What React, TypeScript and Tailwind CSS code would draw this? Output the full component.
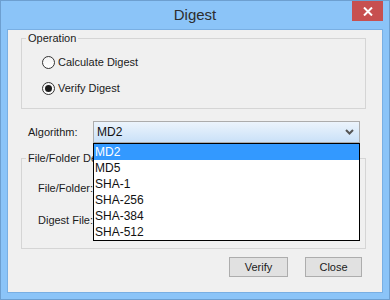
import { useState } from "react";

const algorithms = ["MD2", "MD5", "SHA-1", "SHA-256", "SHA-384", "SHA-512"];

const Radio = ({ checked, label }: { checked: boolean; label: string }) => {
  return (
    <label className="flex h-[26px] items-center">
      <span className="flex h-[13px] w-[13px] items-center justify-center rounded-full border border-[#333333] bg-linear-to-b from-[#f4f4f4] to-white">
        {checked && <span className="h-[7px] w-[7px] rounded-full bg-[#1b1b1b]"></span>}
      </span>
      <span className="ml-[3px] text-[#1b1b1b]">{label}</span>
    </label>
  );
};

const App = () => {
  const [selected] = useState("MD2");

  return (
    <div className="flex h-[300px] w-[390px] flex-col border border-[#6d9fd0] bg-[#8bc4f8] font-['Liberation_Sans',Arial,sans-serif] text-[11px]">
      {/* title bar */}
      <div className="relative flex h-[28px] items-center justify-center">
        <span className="text-[15px] text-[#2d2d2d]">Digest</span>
        <button className="absolute right-[6px] top-0 flex h-[20px] w-[31px] items-center justify-center bg-[#c75050]">
          <svg width="10" height="9" viewBox="0 0 10 9">
            <path d="M1 0.5 L9 8.5 M9 0.5 L1 8.5" stroke="white" strokeWidth="2" />
          </svg>
        </button>
      </div>

      {/* client area */}
      <div className="relative mx-[6px] h-[264px] border border-[#79afe3] bg-[#f0f0f0]">
        <fieldset className="ml-[13px] h-[79px] w-[345px] border border-[#d5d5d5]">
          <legend className="ml-[4px] px-[2px] leading-[16px] text-[#1b1b1b]">Operation</legend>
          <div className="mt-[3px] flex flex-col pl-[20px]">
            <Radio checked={false} label="Calculate Digest" />
            <Radio checked={true} label="Verify Digest" />
          </div>
        </fieldset>

        <div className="mt-[12px] flex h-[22px] items-center pl-[20px]">
          <span className="w-[65px] text-[#1b1b1b]">Algorithm:</span>
          <div className="flex h-[22px] w-[267px] items-center justify-between border border-[#acacac] bg-linear-to-b from-[#ecf4fc] to-[#cae1f8] pl-[3px] pr-[5px]">
            <span className="text-[12px] text-[#111]">{selected}</span>
            <svg width="9" height="6" viewBox="0 0 9 6">
              <path d="M1 1 L4.5 4.5 L8 1" stroke="#555" strokeWidth="2" fill="none" />
            </svg>
          </div>
        </div>

        <fieldset className="ml-[13px] mt-[7px] h-[99px] w-[345px] border border-[#d5d5d5]">
          <legend className="ml-[4px] px-[2px] leading-[16px] text-[#1b1b1b]">File/Folder Details</legend>
          <div className="pl-[16px]">
            <div className="mt-[11px] flex h-[22px] items-center text-[#1b1b1b]">File/Folder:</div>
            <div className="mt-[10px] flex h-[22px] items-center text-[#1b1b1b]">Digest File:</div>
          </div>
        </fieldset>

        <div className="mt-[8px] flex justify-end gap-[17px] pr-[20px]">
          <button className="h-[20px] w-[59px] border border-[#adadad] bg-[#e1e1e1] text-[11px] text-[#1b1b1b]">
            Verify
          </button>
          <button className="h-[20px] w-[57px] border border-[#adadad] bg-[#e1e1e1] text-[11px] text-[#1b1b1b]">
            Close
          </button>
        </div>

        {/* open dropdown list, drawn over the form */}
        <ul className="absolute left-[85px] top-[113px] w-[267px] border border-black bg-white text-[12px] leading-[16px] text-[#111]">
          {algorithms.map((a) => (
            <li
              key={a}
              className={a === selected ? "bg-[#3399ff] px-[1px] text-white" : "px-[1px]"}
            >
              {a}
            </li>
          ))}
        </ul>
      </div>
    </div>
  );
};

export default App;
